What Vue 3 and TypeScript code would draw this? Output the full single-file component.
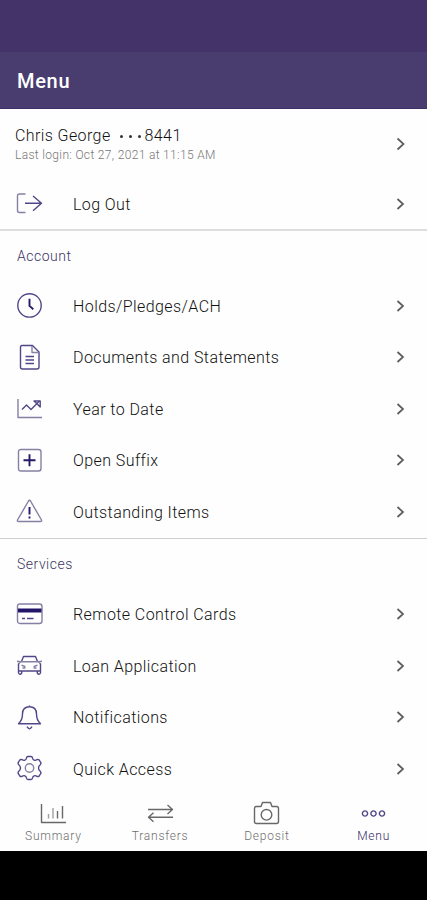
<script setup lang="ts">
type IconName =
  | 'logout' | 'clock' | 'document' | 'trend' | 'plus' | 'warning'
  | 'card' | 'car' | 'bell' | 'gear'
  | 'summary' | 'transfers' | 'deposit' | 'menu'

interface Shape {
  d: string
  kind?: 'soft' | 'bold' | 'fill'
}

interface MenuItem {
  label: string
  icon: IconName
}

interface Section {
  title: string
  items: MenuItem[]
}

const icons: Record<IconName, Shape[]> = {
  logout: [
    { d: 'M9.500 4H3.500Q1.500 4 1.500 6V20.500Q1.500 22.500 3.500 22.500H9.500', kind: 'soft' },
    { d: 'M9 13.300H25.500M17 6L25.500 13.300L17 20.800' }
  ],
  clock: [
    { d: 'M13.500 1.700a11.700 11.700 0 1 1 0 23.400a11.700 11.700 0 1 1 0-23.400z' },
    { d: 'M13.500 6.700V13.900L17.300 17.200', kind: 'bold' }
  ],
  document: [
    { d: 'M6 1.500H16.500L23 8V23Q23 25 21 25H6.500Q4.500 25 4.500 23V3Q4.500 1.500 6 1.500z' },
    { d: 'M16 2V8.500H22.500', kind: 'soft' },
    { d: 'M9.500 12.500H18M9.500 16H18M9.500 19.500H18' }
  ],
  trend: [
    { d: 'M2 4V22.500H26', kind: 'soft' },
    { d: 'M6 14.500L10.500 10L15 14.500L23.500 6' },
    { d: 'M18 6H24.200V12L21.500 9.300z' }
  ],
  plus: [
    { d: 'M5 2.500H22.500Q25 2.500 25 5V21.500Q25 24 22.500 24H5Q2.500 24 2.500 21.500V5Q2.500 2.500 5 2.500z', kind: 'soft' },
    { d: 'M13.500 7.300V19.200M7.500 13.300H19.500', kind: 'bold' }
  ],
  warning: [
    { d: 'M12.500 3Q13.500 1.500 14.500 3L25.500 22Q26 23.500 24.500 23.500H2.500Q1 23.500 1.500 22z', kind: 'soft' },
    { d: 'M13.500 9V16.500M13.500 18.500V20.500', kind: 'bold' }
  ],
  card: [
    { d: 'M4 3H23.500Q26 3 26 5.500V20Q26 22.500 23.500 22.500H4Q1.500 22.500 1.500 20V5.500Q1.500 3 4 3z', kind: 'soft' },
    { d: 'M2 7.500H25.500V11.500H2z', kind: 'fill' },
    { d: 'M6 17.500H9M11 17.500H17.500' }
  ],
  car: [
    { d: 'M5.500 9.500L7.500 4.500H19.500L21.500 9.500' },
    { d: 'M4.500 9.700H22.500M1 9.200L4.500 9.700L2.500 12M26 9.200L22.500 9.700L24.500 12', kind: 'soft' },
    { d: 'M2.500 11.500V21Q4 23.500 5.700 21V19H21.300V21Q23 23.500 24.500 21V11.500M2.500 19H24.500' },
    { d: 'M5.500 13.200L8.800 14.500V16H6.500M21.500 13.200L18.200 14.500V16H20.500', kind: 'soft' }
  ],
  bell: [
    { d: 'M13.500 1.500V3M13.500 2.700C8.500 2.700 6.500 6 6.500 10C6.500 14.500 5.500 17 2.500 19.800H24.500C21.500 17 20.500 14.500 20.500 10C20.500 6 18.500 2.700 13.500 2.700z' },
    { d: 'M11 22.700Q13.500 27 16 22.700' }
  ],
  gear: [
    { d: 'M12 1.500H15Q16.300 1.500 16.500 3Q16.800 5 18.500 5.300Q19.500 5.600 21 4.700Q22.300 4 23.200 5L24.800 7.600Q25.300 8.800 24.200 9.700Q22.500 11 22.500 13Q22.500 15 24.200 16.300Q25.300 17.200 24.800 18.400L23.200 21Q22.300 22 21 21.300Q19.500 20.400 18.500 20.700Q16.800 21 16.500 23Q16.300 24.500 15 24.500H12Q10.700 24.500 10.500 23Q10.200 21 8.500 20.700Q7.500 20.400 6 21.300Q4.700 22 3.800 21L2.200 18.400Q1.700 17.200 2.800 16.300Q4.500 15 4.500 13Q4.500 11 2.800 9.700Q1.700 8.800 2.200 7.600L3.800 5Q4.700 4 6 4.700Q7.500 5.600 8.500 5.300Q10.200 5 10.500 3Q10.700 1.500 12 1.500z' },
    { d: 'M13.500 8.800a4.200 4.200 0 1 1 0 8.400a4.200 4.200 0 1 1 0-8.400z', kind: 'soft' }
  ],
  summary: [
    { d: 'M1.500 4V22.500H26' },
    { d: 'M8.500 14V18.500M13 8V18.500', kind: 'soft' },
    { d: 'M17.500 11V18.500M22.500 6V18.500' }
  ],
  transfers: [
    { d: 'M1 9.500H25.500M20.500 5L25.500 9.500L20.500 14M26 17.200H1.500M6.500 12.700L1.500 17.200L6.500 21.700' }
  ],
  deposit: [
    { d: 'M3.500 6.500H8L9.500 2.500H17.500L19 6.500H23.500Q25.500 6.500 25.500 8.500V21.500Q25.500 23.500 23.500 23.500H3.500Q1.500 23.500 1.500 21.500V8.500Q1.500 6.500 3.500 6.500z' },
    { d: 'M13.500 9.500a5.300 5.300 0 1 1 0 10.600a5.300 5.300 0 1 1 0-10.600z' }
  ],
  menu: [
    { d: 'M5 10.900a2.600 2.600 0 1 1 0 5.200a2.600 2.600 0 1 1 0-5.200zM13.500 10.900a2.600 2.600 0 1 1 0 5.200a2.600 2.600 0 1 1 0-5.200zM22 10.900a2.600 2.600 0 1 1 0 5.200a2.600 2.600 0 1 1 0-5.200z' }
  ]
}

const sections: Section[] = [
  {
    title: 'Account',
    items: [
      { label: 'Holds/Pledges/ACH', icon: 'clock' },
      { label: 'Documents and Statements', icon: 'document' },
      { label: 'Year to Date', icon: 'trend' },
      { label: 'Open Suffix', icon: 'plus' },
      { label: 'Outstanding Items', icon: 'warning' }
    ]
  },
  {
    title: 'Services',
    items: [
      { label: 'Remote Control Cards', icon: 'card' },
      { label: 'Loan Application', icon: 'car' },
      { label: 'Notifications', icon: 'bell' },
      { label: 'Quick Access', icon: 'gear' }
    ]
  }
]

const tabs: MenuItem[] = [
  { label: 'Summary', icon: 'summary' },
  { label: 'Transfers', icon: 'transfers' },
  { label: 'Deposit', icon: 'deposit' },
  { label: 'Menu', icon: 'menu' }
]
</script>

<template>
  <div class="screen">
    <div class="status"></div>
    <header class="header"><h1>Menu</h1></header>

    <main class="content">
      <div class="profile">
        <div class="who">
          <div class="name"><span>Chris George</span><span class="dots"><i></i><i></i><i></i></span><span>8441</span></div>
          <div class="login">Last login: Oct 27, 2021 at 11:15 AM</div>
        </div>
        <svg class="chevron" viewBox="0 0 10 14"><path d="M1.500 1.500L7.500 7L1.500 12.500" /></svg>
      </div>

      <div class="row logout">
        <svg class="icon" viewBox="0 0 27 27">
          <path v-for="(s, i) in icons.logout" :key="i" :d="s.d" :class="s.kind" />
        </svg>
        <span class="label">Log Out</span>
        <svg class="chevron" viewBox="0 0 10 14"><path d="M1.500 2L7 7L1.500 12" /></svg>
      </div>

      <section v-for="section in sections" :key="section.title" class="section">
        <h2>{{ section.title }}</h2>
        <div v-for="item in section.items" :key="item.label" class="row">
          <svg class="icon" viewBox="0 0 27 27">
            <path v-for="(s, i) in icons[item.icon]" :key="i" :d="s.d" :class="s.kind" />
          </svg>
          <span class="label">{{ item.label }}</span>
          <svg class="chevron" viewBox="0 0 10 14"><path d="M1.500 2L7 7L1.500 12" /></svg>
        </div>
      </section>
    </main>

    <nav class="tabs">
      <div v-for="tab in tabs" :key="tab.label" class="tab" :class="{ active: tab.icon === 'menu' }">
        <svg class="icon" viewBox="0 0 27 27">
          <path v-for="(s, i) in icons[tab.icon]" :key="i" :d="s.d" :class="s.kind" />
        </svg>
        <span>{{ tab.label }}</span>
      </div>
    </nav>
    <div class="system"></div>
  </div>
</template>

<style>
body {
  margin: 0;
  background: #000;
}
</style>

<style scoped>
.screen {
  display: flex;
  flex-direction: column;
  width: 427px;
  height: 900px;
  overflow: hidden;
  background: #fefefe;
  font-family: Roboto, sans-serif;
}
.status {
  height: 52px;
  background: #433369;
}
.header {
  display: flex;
  align-items: center;
  box-sizing: border-box;
  height: 57px;
  padding: 2px 17px 0;
  background: #493d70;
  border-bottom: 1px solid #3f3068;
}
h1 {
  margin: 0;
  color: #fff;
  font-size: 20px;
  font-weight: 500;
  line-height: 24px;
  letter-spacing: 0.7px;
}
.content {
  height: 686px;
}
.profile {
  display: flex;
  align-items: center;
  box-sizing: border-box;
  height: 69px;
  padding: 1px 21px 0 15px;
}
.who {
  flex: 1;
  padding-top: 2px;
}
.name {
  display: flex;
  align-items: center;
  color: #111;
  font-size: 16px;
  font-weight: 300;
  line-height: 20px;
  letter-spacing: 0.4px;
}
.dots {
  display: flex;
  gap: 6px;
  margin: 0 4px 0 9px;
}
.dots i {
  width: 3px;
  height: 3px;
  border-radius: 50%;
  background: #333;
}
.login {
  color: #777;
  font-size: 12px;
  font-weight: 300;
  line-height: 18px;
  letter-spacing: 0.33px;
}
.row {
  display: flex;
  align-items: center;
  box-sizing: border-box;
  height: 51.5px;
  padding: 0 21px 0 16px;
}
.logout {
  height: 51px;
}
.icon {
  flex: none;
  width: 27px;
  height: 27px;
  fill: none;
  stroke: #514788;
  stroke-width: 1.4;
  stroke-linejoin: round;
}
.icon .soft {
  stroke: #8580a4;
}
.icon .bold {
  stroke: #241969;
  stroke-width: 1.9;
}
.icon .fill {
  fill: #211568;
  stroke: none;
}
.label {
  flex: 1;
  margin-left: 30px;
  padding-top: 2px;
  color: #111;
  font-size: 16px;
  font-weight: 300;
  line-height: 20px;
  letter-spacing: 0.42px;
}
.chevron {
  flex: none;
  width: 10px;
  height: 14px;
  fill: none;
  stroke: #5c5c5c;
  stroke-width: 1.7;
}
.section {
  border-top: 2px solid #dedede;
}
.section + .section {
  border-top: 1px solid #cfcfcf;
}
h2 {
  margin: 0;
  padding-left: 17px;
  height: 49px;
  color: #3c3464;
  font-size: 14px;
  font-weight: 300;
  line-height: 50px;
  letter-spacing: 0.5px;
}
.section + .section h2 {
  height: 50px;
  line-height: 50px;
}
.tabs {
  display: flex;
  height: 56px;
}
.tab {
  display: flex;
  flex: 1;
  flex-direction: column;
  align-items: center;
  padding-top: 5px;
  color: #6e6e6e;
  font-size: 12px;
  font-weight: 300;
  line-height: 18px;
  letter-spacing: 0.75px;
}
.tab .icon {
  stroke: #686868;
}
.tab .soft {
  stroke: #a0a0a0;
}
.tab.active {
  color: #352c68;
}
.tab.active .icon {
  stroke: #514788;
}
.system {
  flex: 1;
  background: #000;
}
</style>
